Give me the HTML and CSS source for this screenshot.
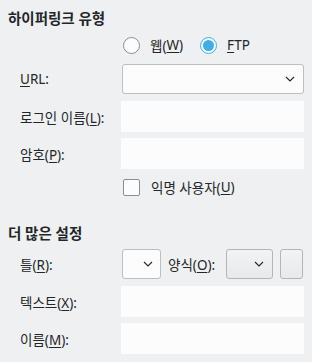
FILE: index.html
```html
<!DOCTYPE html>
<html lang="ko">
<head>
    <meta charset="UTF-8" />
    <title>하이퍼링크</title>
    <link rel="stylesheet" href="styles.css">
</head>
<body>

<h2 class="group-title">하이퍼링크 유형</h2>

<div class="row radio-row">
    <div class="label"></div>
    <div class="field">
        <label class="radio"><span class="radio-mark"></span>웹(<u>W</u>)</label>
        <label class="radio"><span class="radio-mark checked"></span><u>F</u>TP</label>
    </div>
</div>

<div class="row url-row">
    <div class="label"><u>U</u>RL:</div>
    <div class="field">
        <div class="combo wide">
            <svg class="chevron" width="10" height="6" viewBox="0 0 10 6"><path d="M1 1 L5 5 L9 1" fill="none" stroke="#232629" stroke-width="1.1"/></svg>
        </div>
    </div>
</div>

<div class="row input-row login-row">
    <div class="label">로그인 이름(<u>L</u>):</div>
    <div class="field"><div class="input"></div></div>
</div>

<div class="row input-row pw-row">
    <div class="label">암호(<u>P</u>):</div>
    <div class="field"><div class="input"></div></div>
</div>

<div class="row check-row">
    <div class="label"></div>
    <div class="field">
        <label class="check"><span class="check-mark"></span>익명 사용자(<u>U</u>)</label>
    </div>
</div>

<h2 class="group-title second">더 많은 설정</h2>

<div class="row frame-row">
    <div class="label">틀(<u>R</u>):</div>
    <div class="field">
        <div class="combo small">
            <svg class="chevron" width="10" height="6" viewBox="0 0 10 6"><path d="M1 1 L5 5 L9 1" fill="none" stroke="#232629" stroke-width="1.1"/></svg>
        </div>
        <span class="inline-label">양식(<u>O</u>):</span>
        <div class="combo button-combo">
            <svg class="chevron" width="10" height="6" viewBox="0 0 10 6"><path d="M1 1 L5 5 L9 1" fill="none" stroke="#232629" stroke-width="1.1"/></svg>
        </div>
        <div class="push"></div>
    </div>
</div>

<div class="row input-row text-row">
    <div class="label">텍스트(<u>X</u>):</div>
    <div class="field"><div class="input"></div></div>
</div>

<div class="row input-row name-row">
    <div class="label">이름(<u>M</u>):</div>
    <div class="field"><div class="input"></div></div>
</div>

</body>
</html>
```

FILE: styles.css
```css
body {
    margin: 0;
    padding: 8px 8px 0 8px;
    background: #eff0f1;
    color: #232629;
    font-family: "Noto Sans", "Noto Sans CJK KR", sans-serif;
    font-size: 13.5px;
    width: 296px;
    height: 354px;
    overflow: hidden;
}
u {
    text-decoration: underline;
    text-underline-offset: 2px;
}
.group-title {
    margin: 0;
    font-size: 14.5px;
    font-weight: bold;
    line-height: 20px;
}
.group-title.second {
    margin-top: 26px;
}
.row {
    display: flex;
    align-items: center;
}
.label {
    width: 101px;
    padding-left: 12px;
    flex: none;
    white-space: nowrap;
}
.field {
    flex: 1;
    display: flex;
    align-items: center;
}
.radio-row {
    height: 24px;
    margin-top: 5px;
}
.radio {
    display: flex;
    align-items: center;
    margin-right: 15px;
}
.radio-mark {
    width: 15px;
    height: 15px;
    border: 1px solid #8c8d8e;
    border-radius: 50%;
    background: #fcfcfc;
    margin: 0 10px 0 2px;
    position: relative;
}
.radio-mark.checked {
    border-color: #3daee9;
}
.radio-mark.checked::after {
    content: "";
    position: absolute;
    left: 2px;
    top: 2px;
    width: 11px;
    height: 11px;
    border-radius: 50%;
    background: #3daee9;
}
.url-row {
    height: 30px;
    margin-top: 7px;
}
.combo {
    height: 28px;
    border: 1px solid #bcbebf;
    border-radius: 3px;
    background: #fcfcfc;
    display: flex;
    align-items: center;
    justify-content: flex-end;
    box-sizing: border-box;
}
.combo.wide {
    height: 30px;
    width: 182px;
    margin-left: 1px;
    padding-right: 8px;
}
.combo.small {
    width: 39px;
    height: 30px;
    margin-left: 1px;
    padding-right: 7px;
}
.combo.button-combo {
    width: 47px;
    height: 30px;
    padding-right: 8px;
    background: linear-gradient(#f3f3f4, #e8e9ea);
    border-color: #b4b5b6;
}
.push {
    width: 23px;
    height: 30px;
    margin-left: 7px;
    box-sizing: border-box;
    border: 1px solid #b4b5b6;
    border-radius: 3px;
    background: linear-gradient(#f3f3f4, #e8e9ea);
}
.inline-label {
    width: 49px;
    margin: 0 9px 0 7px;
    white-space: nowrap;
}
.input-row {
    height: 31px;
    margin-top: 6px;
}
.login-row {
    margin-top: 7px;
}
.text-row {
    margin-top: 7px;
}
.input {
    width: 183px;
    height: 31px;
    background: #fcfcfc;
}
.check-row {
    height: 20px;
    margin-top: 8px;
}
.check {
    display: flex;
    align-items: center;
}
.check-mark {
    width: 15px;
    height: 15px;
    border: 1px solid #8c8d8e;
    border-radius: 2px;
    background: #fcfcfc;
    margin: 0 11px 0 2px;
}
.frame-row {
    height: 30px;
    margin-top: 6px;
}
```
